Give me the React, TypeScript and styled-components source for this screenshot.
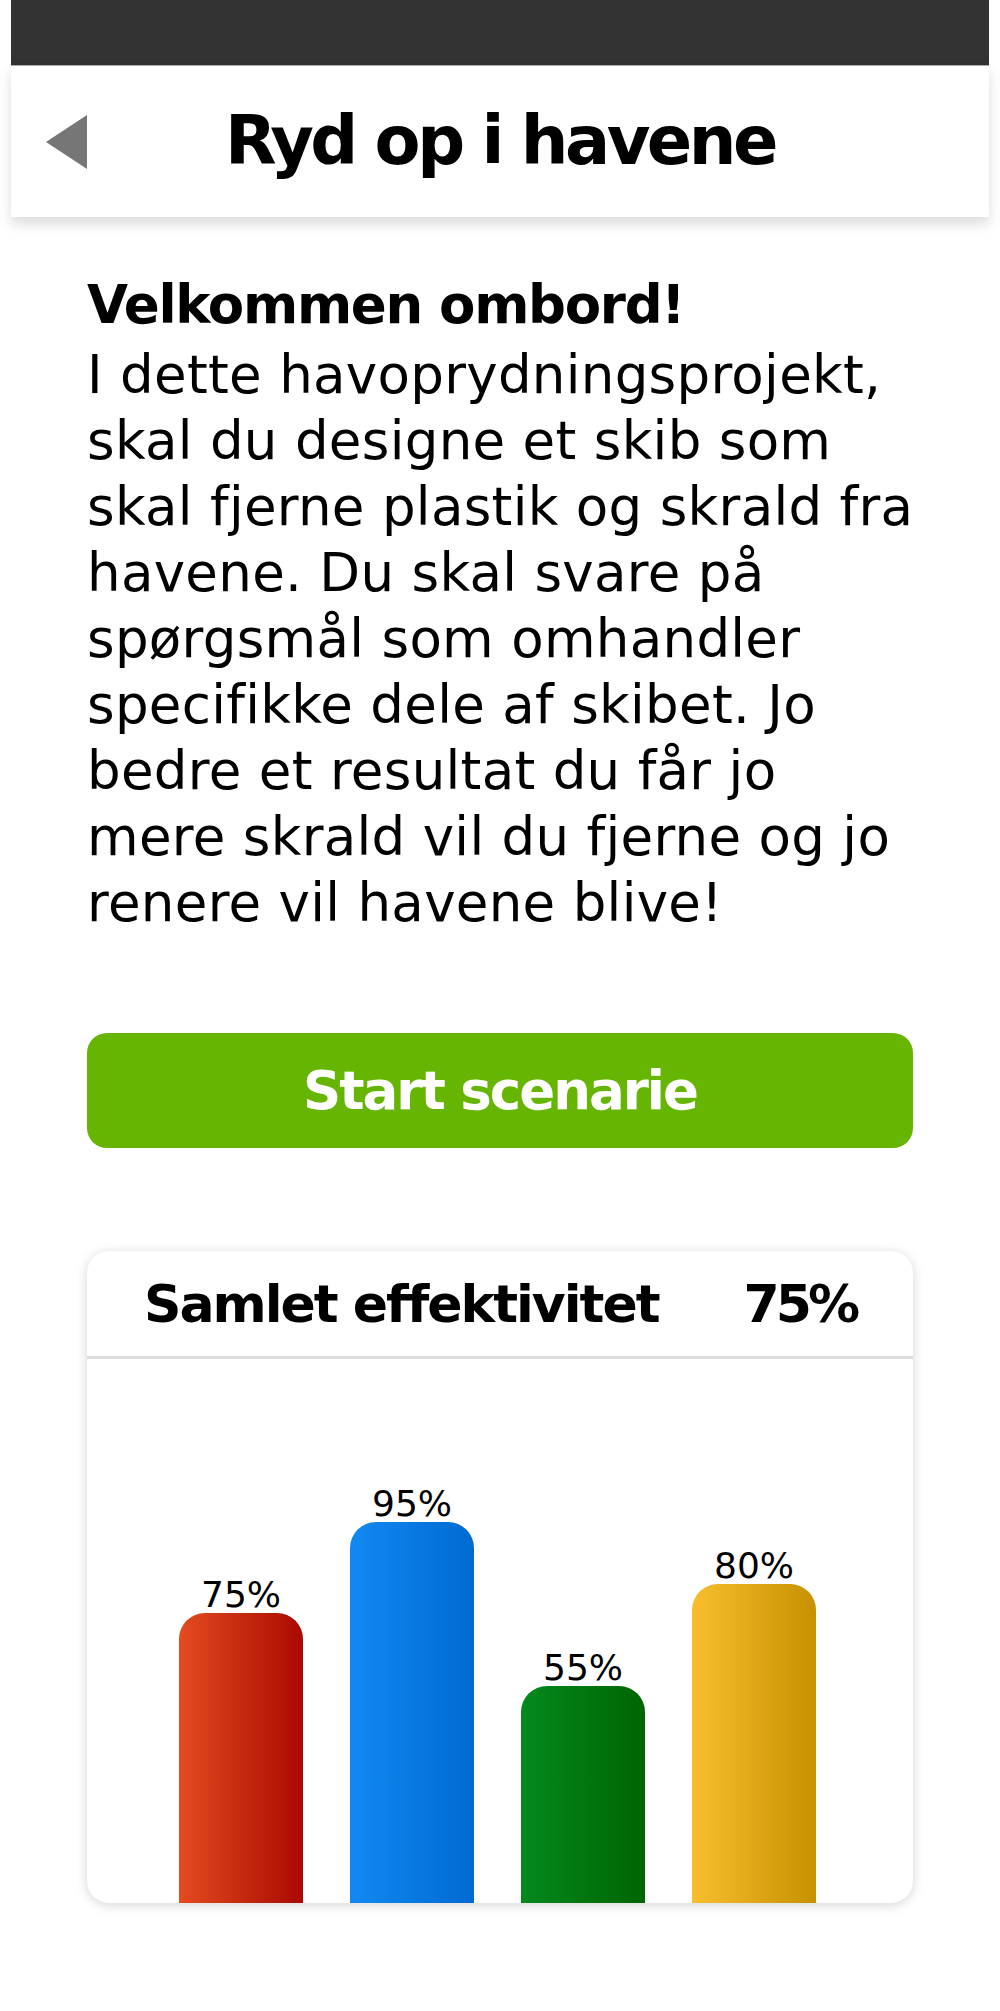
import React from "react";
import styled, { createGlobalStyle } from "styled-components";

const GlobalStyle = createGlobalStyle`
  html, body {
    margin: 0;
    padding: 0;
    background: #ffffff;
  }
  body {
    font-family: "DejaVu Sans", "Liberation Sans", sans-serif;
    color: #000000;
  }
`;

const Page = styled.div`
  width: 978px;
  margin: 0 auto;
`;

const StatusBar = styled.div`
  height: 65px;
  background: #333333;
`;

const Header = styled.header`
  position: relative;
  z-index: 1;
  height: 152px;
  box-sizing: border-box;
  border-top: 1px solid #a8a8a8;
  background: #ffffff;
  box-shadow: 0 7px 12px rgba(0, 0, 0, 0.14);
  display: grid;
  grid-template-columns: 1fr auto 1fr;
  align-items: center;
`;

const BackButton = styled.button`
  justify-self: start;
  margin-left: 35px;
  padding: 0;
  border: none;
  background: none;
  display: flex;
  cursor: pointer;
`;

const Title = styled.h1`
  margin: 0;
  font-size: 67px;
  font-weight: 700;
  line-height: 1;
  letter-spacing: -3.5px;
`;

const Content = styled.main`
  display: flex;
  flex-direction: column;
  padding: 55px 76px 100px;
`;

const IntroText = styled.div`
  display: flex;
  flex-direction: column;
  gap: 4px;
  font-size: 53px;
  line-height: 66px;
  white-space: nowrap;
`;

const Heading = styled.div`
  font-weight: 700;
  letter-spacing: -1.3px;
`;

const Paragraph = styled.div`
  letter-spacing: 0.3px;
`;

const Line = styled.div``;

const StartButton = styled.button`
  display: block;
  width: 100%;
  height: 115px;
  margin-top: 97px;
  border: none;
  border-radius: 20px;
  background: #66b502;
  color: #ffffff;
  font-family: inherit;
  font-size: 53px;
  font-weight: 700;
  letter-spacing: -2px;
  cursor: pointer;
`;

const Card = styled.section`
  margin-top: 103px;
  border-radius: 22px;
  background: #ffffff;
  box-shadow: 0 2px 12px rgba(0, 0, 0, 0.17);
  overflow: hidden;
`;

const CardHeader = styled.div`
  height: 105px;
  padding: 0 57px;
  display: flex;
  justify-content: space-between;
  align-items: center;
  border-bottom: 3px solid #dddddd;
  font-size: 52px;
  font-weight: 700;
  letter-spacing: -2px;
`;

const Total = styled.span`
  letter-spacing: -4px;
`;

const Chart = styled.div`
  height: 544px;
  padding-left: 92px;
  display: flex;
  align-items: flex-end;
  gap: 47px;
`;

const BarColumn = styled.div`
  width: 124px;
  display: flex;
  flex-direction: column;
  align-items: center;
`;

const BarLabel = styled.span`
  font-size: 36px;
  line-height: 36px;
`;

const Bar = styled.div<{ $from: string; $to: string }>`
  width: 100%;
  border-radius: 26px 26px 0 0;
  background: linear-gradient(to right, ${(p) => p.$from}, ${(p) => p.$to});
`;

const lines = [
  "I dette havoprydningsprojekt,",
  "skal du designe et skib som",
  "skal fjerne plastik og skrald fra",
  "havene. Du skal svare på",
  "spørgsmål som omhandler",
  "specifikke dele af skibet. Jo",
  "bedre et resultat du får jo",
  "mere skrald vil du fjerne og jo",
  "renere vil havene blive!",
];

const bars = [
  { label: "75%", height: 290, from: "#e44b1f", to: "#a90900" },
  { label: "95%", height: 381, from: "#1289f2", to: "#006ad2" },
  { label: "55%", height: 217, from: "#03891d", to: "#006500" },
  { label: "80%", height: 319, from: "#f8be2e", to: "#c79100" },
];

export default function App() {
  return (
    <>
      <GlobalStyle />
      <Page>
        <StatusBar />
        <Header>
          <BackButton aria-label="Tilbage">
            <svg width="41" height="54" viewBox="0 0 41 54">
              <polygon points="41,0 0,27 41,54" fill="#767676" />
            </svg>
          </BackButton>
          <Title>Ryd op i havene</Title>
          <span />
        </Header>
        <Content>
          <IntroText>
            <Heading>Velkommen ombord!</Heading>
            <Paragraph>
              {lines.map((l) => (
                <Line key={l}>{l}</Line>
              ))}
            </Paragraph>
          </IntroText>
          <StartButton>Start scenarie</StartButton>
          <Card>
            <CardHeader>
              <span>Samlet effektivitet</span>
              <Total>75%</Total>
            </CardHeader>
            <Chart>
              {bars.map((b) => (
                <BarColumn key={b.label + b.from}>
                  <BarLabel>{b.label}</BarLabel>
                  <Bar $from={b.from} $to={b.to} style={{ height: b.height }} />
                </BarColumn>
              ))}
            </Chart>
          </Card>
        </Content>
      </Page>
    </>
  );
}
